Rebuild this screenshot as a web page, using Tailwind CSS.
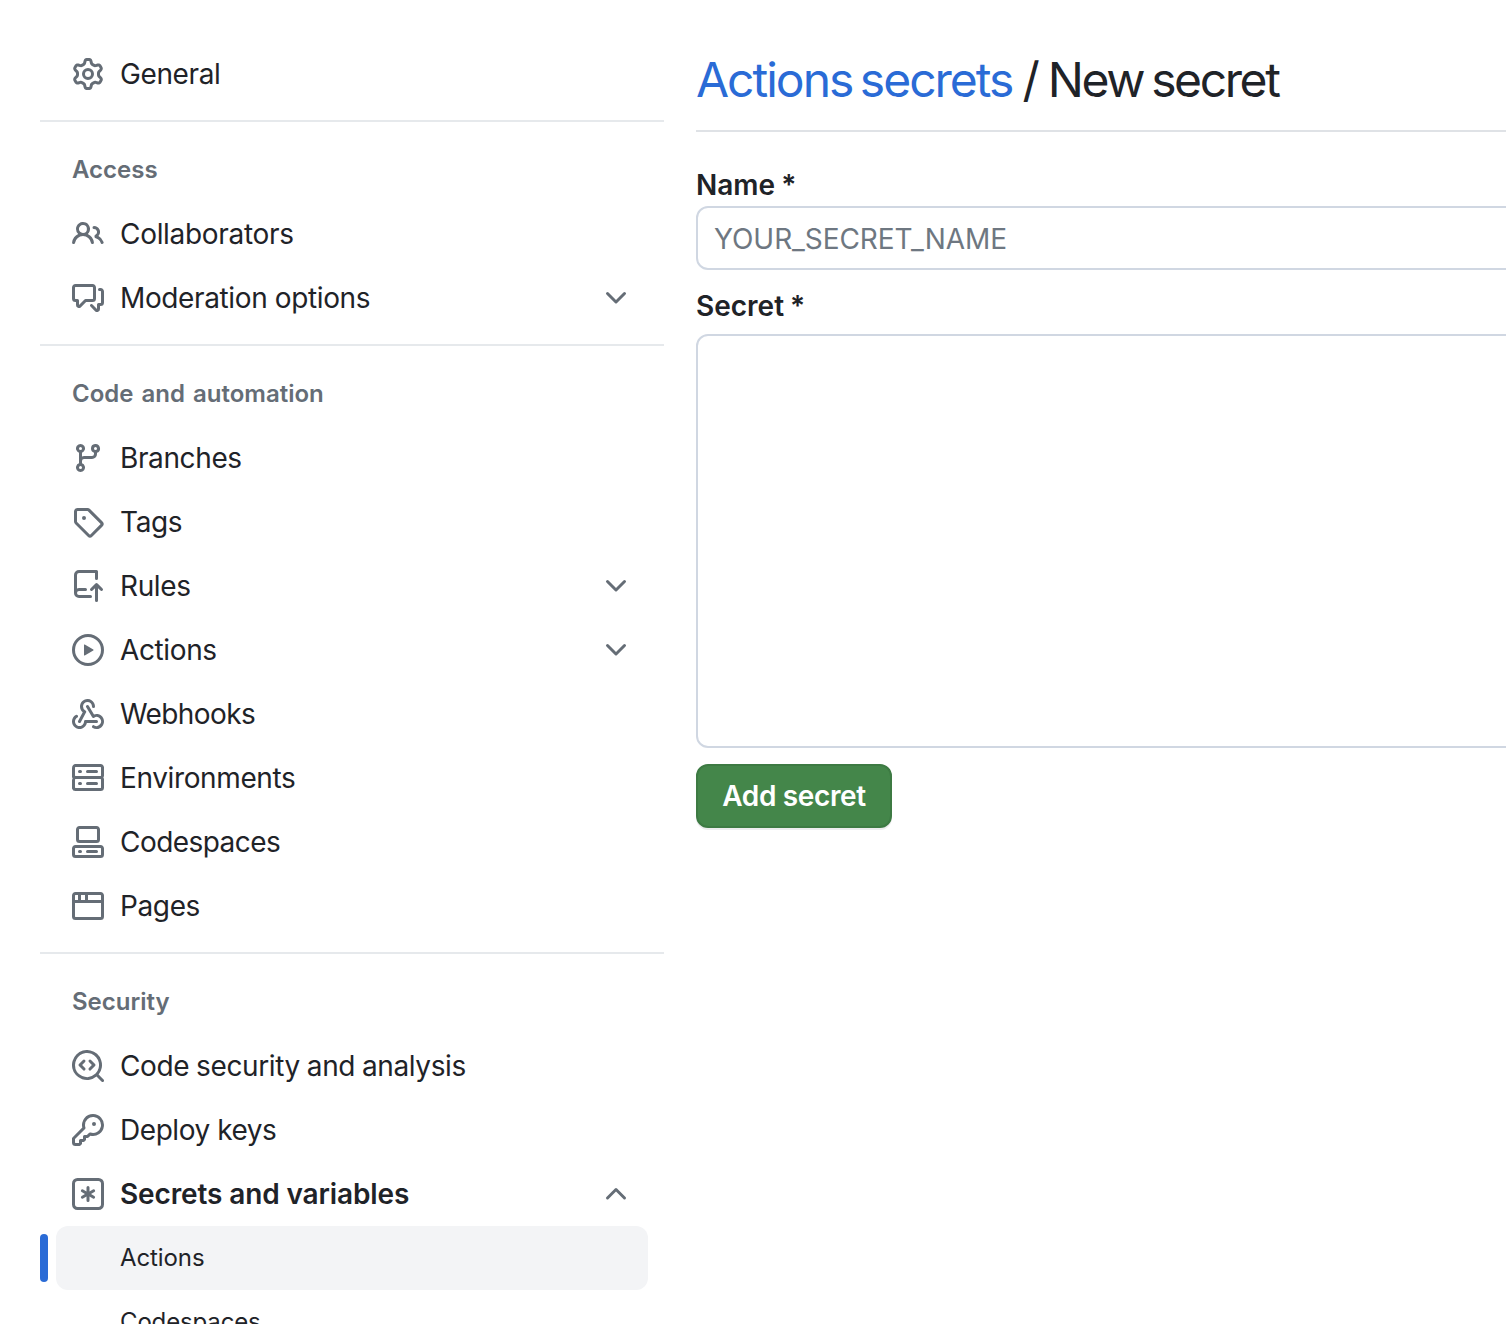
<!DOCTYPE html>
<html lang="en">
<head>
  <meta charset="UTF-8">
  <meta name="viewport" content="width=device-width, initial-scale=1.0">
  <title>Actions secrets / New secret</title>
  <script src="https://cdn.jsdelivr.net/npm/@tailwindcss/browser@4"></script>
</head>
<body class="bg-white text-[#1f2328] font-['Inter',sans-serif] h-[1324px] overflow-hidden">
  <div class="flex gap-8 pl-10 h-[1324px] overflow-hidden">

    <!-- Sidebar -->
    <nav class="w-[624px] shrink-0 pt-[42px] text-[28px] tracking-[-0.38px]">
      <a class="mx-4 px-4 h-16 rounded-xl flex items-center gap-4">
        <svg class="w-8 h-8 fill-[#656d76] shrink-0" viewBox="0 0 16 16"><path d="M8 0a8.2 8.2 0 0 1 .701.031C9.444.095 9.99.645 10.16 1.29l.288 1.107c.018.066.079.158.212.224.231.114.454.243.668.386.123.082.233.09.299.071l1.103-.303c.644-.176 1.392.021 1.82.63.27.385.506.792.704 1.218.315.675.111 1.422-.364 1.891l-.814.806c-.049.048-.098.147-.088.294.016.257.016.515 0 .772-.01.147.038.246.088.294l.814.806c.475.469.679 1.216.364 1.891a7.977 7.977 0 0 1-.704 1.217c-.428.61-1.176.807-1.82.63l-1.102-.302c-.067-.019-.177-.011-.3.071a5.909 5.909 0 0 1-.668.386c-.133.066-.194.158-.211.224l-.29 1.106c-.168.646-.715 1.196-1.458 1.26a8.006 8.006 0 0 1-1.402 0c-.743-.064-1.289-.614-1.458-1.26l-.289-1.106c-.018-.066-.079-.158-.212-.224a5.738 5.738 0 0 1-.668-.386c-.123-.082-.233-.09-.299-.071l-1.103.303c-.644.176-1.392-.021-1.82-.63a8.12 8.12 0 0 1-.704-1.218c-.315-.675-.111-1.422.363-1.891l.815-.806c.05-.048.098-.147.088-.294a6.214 6.214 0 0 1 0-.772c.01-.147-.038-.246-.088-.294l-.815-.806C.635 6.045.431 5.298.746 4.623a7.92 7.92 0 0 1 .704-1.217c.428-.61 1.176-.807 1.82-.63l1.102.302c.067.019.177.011.3-.071.214-.143.437-.272.668-.386.133-.066.194-.158.211-.224l.29-1.106C6.009.645 6.556.095 7.299.03 7.53.01 7.764 0 8 0Zm-.571 1.525c-.036.003-.108.036-.137.146l-.289 1.105c-.147.561-.549.967-.998 1.189-.173.086-.34.183-.5.29-.417.278-.97.423-1.529.27l-1.103-.303c-.109-.03-.175.016-.195.045-.22.312-.412.644-.573.99-.014.031-.021.11.059.19l.815.806c.411.406.562.957.53 1.456a4.709 4.709 0 0 0 0 .582c.032.499-.119 1.05-.53 1.456l-.815.806c-.081.08-.073.159-.059.19.162.346.353.677.573.989.02.03.085.076.195.046l1.102-.303c.56-.153 1.113-.008 1.53.27.161.107.328.204.501.29.447.222.85.629.997 1.189l.289 1.105c.029.109.101.143.137.146a6.6 6.6 0 0 0 1.142 0c.036-.003.108-.036.137-.146l.289-1.105c.147-.561.549-.967.998-1.189.173-.086.34-.183.5-.29.417-.278.97-.423 1.529-.27l1.103.303c.109.029.175-.016.195-.045.22-.313.411-.644.573-.99.014-.031.021-.11-.059-.19l-.815-.806c-.411-.406-.562-.957-.53-1.456a4.709 4.709 0 0 0 0-.582c-.032-.499.119-1.05.53-1.456l.815-.806c.081-.08.073-.159.059-.19a6.464 6.464 0 0 0-.573-.989c-.02-.03-.085-.076-.195-.046l-1.102.303c-.56.153-1.113.008-1.53-.27a4.44 4.44 0 0 0-.501-.29c-.447-.222-.85-.629-.997-1.189l-.289-1.105c-.029-.11-.101-.143-.137-.146a6.6 6.6 0 0 0-1.142 0ZM11 8a3 3 0 1 1-6 0 3 3 0 0 1 6 0ZM9.5 8a1.5 1.5 0 1 0-3.001.001A1.5 1.5 0 0 0 9.5 8Z"/></svg>
        <span>General</span>
      </a>

      <!-- Access -->
      <div class="mt-[14px] h-0.5 bg-[#e6e9ec]"></div>
      <h2 class="mt-7 mb-3 px-8 h-10 flex items-center text-[24px] font-semibold text-[#656d76] tracking-normal">Access</h2>
      <a class="mx-4 px-4 h-16 rounded-xl flex items-center gap-4">
        <svg class="w-8 h-8 fill-[#656d76] shrink-0" viewBox="0 0 16 16"><path d="M2 5.5a3.5 3.5 0 1 1 5.898 2.549 5.508 5.508 0 0 1 3.034 4.084.75.75 0 1 1-1.482.235 4 4 0 0 0-7.9 0 .75.75 0 0 1-1.482-.236A5.507 5.507 0 0 1 3.102 8.05 3.493 3.493 0 0 1 2 5.5ZM11 4a3.001 3.001 0 0 1 2.22 5.018 5.01 5.01 0 0 1 2.56 3.012.749.749 0 0 1-.885.954.752.752 0 0 1-.549-.514 3.507 3.507 0 0 0-2.522-2.372.75.75 0 0 1-.574-.73v-.352a.75.75 0 0 1 .416-.672A1.5 1.5 0 0 0 11 5.5.75.75 0 0 1 11 4Zm-5.5-.5a2 2 0 1 0-.001 3.999A2 2 0 0 0 5.5 3.5Z"/></svg>
        <span class="tracking-[-0.3px]">Collaborators</span>
      </a>
      <a class="mx-4 px-4 h-16 rounded-xl flex items-center gap-4">
        <svg class="w-8 h-8 fill-[#656d76] shrink-0" viewBox="0 0 16 16"><path d="M1.75 1h8.5c.966 0 1.75.784 1.75 1.75v5.5A1.75 1.75 0 0 1 10.25 10H7.061l-2.574 2.573A1.458 1.458 0 0 1 2 11.543V10h-.25A1.75 1.75 0 0 1 0 8.25v-5.5C0 1.784.784 1 1.75 1ZM1.5 2.75v5.5c0 .138.112.25.25.25h1a.75.75 0 0 1 .75.75v2.19l2.72-2.72a.749.749 0 0 1 .53-.22h3.5a.25.25 0 0 0 .25-.25v-5.5a.25.25 0 0 0-.25-.25h-8.5a.25.25 0 0 0-.25.25Zm13 2a.25.25 0 0 0-.25-.25h-.5a.75.75 0 0 1 0-1.5h.5c.966 0 1.75.784 1.75 1.75v5.5A1.75 1.75 0 0 1 14.25 12H14v1.543a1.458 1.458 0 0 1-2.487 1.03L9.22 12.28a.749.749 0 0 1 .326-1.275.749.749 0 0 1 .734.215l2.22 2.22v-2.19a.75.75 0 0 1 .75-.75h1a.25.25 0 0 0 .25-.25Z"/></svg>
        <span>Moderation options</span>
        <svg class="w-8 h-8 fill-[#656d76] shrink-0 ml-auto" viewBox="0 0 16 16"><path d="M12.78 5.22a.749.749 0 0 1 0 1.06l-4.25 4.25a.749.749 0 0 1-1.06 0L3.22 6.28a.749.749 0 1 1 1.06-1.06L8 8.939l3.72-3.719a.749.749 0 0 1 1.06 0Z"/></svg>
      </a>

      <!-- Code and automation -->
      <div class="mt-[14px] h-0.5 bg-[#e6e9ec]"></div>
      <h2 class="mt-7 mb-3 px-8 h-10 flex items-center text-[24px] font-semibold text-[#656d76] tracking-normal [word-spacing:2px]">Code and automation</h2>
      <a class="mx-4 px-4 h-16 rounded-xl flex items-center gap-4">
        <svg class="w-8 h-8 fill-[#656d76] shrink-0" viewBox="0 0 16 16"><path d="M9.5 3.25a2.25 2.25 0 1 1 3 2.122V6A2.5 2.5 0 0 1 10 8.5H6a1 1 0 0 0-1 1v1.128a2.251 2.251 0 1 1-1.5 0V5.372a2.25 2.25 0 1 1 1.5 0v1.836A2.493 2.493 0 0 1 6 7h4a1 1 0 0 0 1-1v-.628A2.25 2.25 0 0 1 9.5 3.25Zm-6 0a.75.75 0 1 0 1.5 0 .75.75 0 0 0-1.5 0Zm8.25-.75a.75.75 0 1 0 0 1.5.75.75 0 0 0 0-1.5ZM4.25 12a.75.75 0 1 0 0 1.5.75.75 0 0 0 0-1.5Z"/></svg>
        <span>Branches</span>
      </a>
      <a class="mx-4 px-4 h-16 rounded-xl flex items-center gap-4">
        <svg class="w-8 h-8 fill-[#656d76] shrink-0" viewBox="0 0 16 16"><path d="M1 7.775V2.75C1 1.784 1.784 1 2.75 1h5.025c.464 0 .91.184 1.238.513l6.25 6.25a1.75 1.75 0 0 1 0 2.474l-5.026 5.026a1.75 1.75 0 0 1-2.474 0l-6.25-6.25A1.752 1.752 0 0 1 1 7.775Zm1.5 0c0 .066.026.13.073.177l6.25 6.25a.25.25 0 0 0 .354 0l5.025-5.025a.25.25 0 0 0 0-.354l-6.25-6.25a.25.25 0 0 0-.177-.073H2.75a.25.25 0 0 0-.25.25ZM6 5a1 1 0 1 1 0 2 1 1 0 0 1 0-2Z"/></svg>
        <span>Tags</span>
      </a>
      <a class="mx-4 px-4 h-16 rounded-xl flex items-center gap-4">
        <svg class="w-8 h-8 fill-[#656d76] shrink-0" viewBox="0 0 16 16"><path d="M1 2.5A2.5 2.5 0 0 1 3.5 0h8.75a.75.75 0 0 1 .75.75v3.5a.75.75 0 0 1-1.5 0V1.5h-8a1 1 0 0 0-1 1v6.708A2.493 2.493 0 0 1 3.5 9h3.25a.75.75 0 0 1 0 1.5H3.5a1 1 0 0 0 0 2h5.75a.75.75 0 0 1 0 1.5H3.5A2.5 2.5 0 0 1 1 11.5Zm13.23 7.79h-.001l-1.224-1.224v6.184a.75.75 0 0 1-1.5 0V9.066L10.28 10.29a.75.75 0 0 1-1.06-1.061l2.505-2.504a.75.75 0 0 1 1.06 0L15.29 9.23a.751.751 0 0 1-.018 1.042.751.751 0 0 1-1.042.018Z"/></svg>
        <span>Rules</span>
        <svg class="w-8 h-8 fill-[#656d76] shrink-0 ml-auto" viewBox="0 0 16 16"><path d="M12.78 5.22a.749.749 0 0 1 0 1.06l-4.25 4.25a.749.749 0 0 1-1.06 0L3.22 6.28a.749.749 0 1 1 1.06-1.06L8 8.939l3.72-3.719a.749.749 0 0 1 1.06 0Z"/></svg>
      </a>
      <a class="mx-4 px-4 h-16 rounded-xl flex items-center gap-4">
        <svg class="w-8 h-8 fill-[#656d76] shrink-0" viewBox="0 0 16 16"><path d="M8 0a8 8 0 1 1 0 16A8 8 0 0 1 8 0ZM1.5 8a6.5 6.5 0 1 0 13 0 6.5 6.5 0 0 0-13 0Zm4.879-2.773 4.264 2.559a.25.25 0 0 1 0 .428l-4.264 2.559A.25.25 0 0 1 6 10.559V5.442a.25.25 0 0 1 .379-.215Z"/></svg>
        <span>Actions</span>
        <svg class="w-8 h-8 fill-[#656d76] shrink-0 ml-auto" viewBox="0 0 16 16"><path d="M12.78 5.22a.749.749 0 0 1 0 1.06l-4.25 4.25a.749.749 0 0 1-1.06 0L3.22 6.28a.749.749 0 1 1 1.06-1.06L8 8.939l3.72-3.719a.749.749 0 0 1 1.06 0Z"/></svg>
      </a>
      <a class="mx-4 px-4 h-16 rounded-xl flex items-center gap-4">
        <svg class="w-8 h-8 fill-[#656d76] shrink-0" viewBox="0 0 16 16"><path d="M5.5 4.25a2.25 2.25 0 0 1 4.5 0 .75.75 0 0 0 1.5 0 3.75 3.75 0 1 0-6.14 2.889l-2.272 4.258a.75.75 0 0 0 1.324.706L7 7.25a.75.75 0 0 0-.309-1.015A2.25 2.25 0 0 1 5.5 4.25Z"/><path d="M7.364 3.607a.75.75 0 0 1 1.03.257l2.608 4.349a3.75 3.75 0 1 1-.628 6.785.75.75 0 0 1 .752-1.299 2.25 2.25 0 1 0-.033-3.88.75.75 0 0 1-1.03-.256L7.107 4.636a.75.75 0 0 1 .257-1.03Z"/><path d="M2.9 8.776A.75.75 0 0 1 2.625 9.8 2.25 2.25 0 1 0 6 11.75a.75.75 0 0 1 .75-.751h5.5a.75.75 0 0 1 0 1.5H7.425a3.751 3.751 0 1 1-5.55-3.998.75.75 0 0 1 1.024.274Z"/></svg>
        <span class="tracking-[-0.6px]">Webhooks</span>
      </a>
      <a class="mx-4 px-4 h-16 rounded-xl flex items-center gap-4">
        <svg class="w-8 h-8 fill-[#656d76] shrink-0" viewBox="0 0 16 16"><path d="M1.75 1h12.5c.966 0 1.75.784 1.75 1.75v4c0 .372-.116.717-.314 1 .198.283.314.628.314 1v4a1.75 1.75 0 0 1-1.75 1.75H1.75A1.75 1.75 0 0 1 0 13.25v-4c0-.372.116-.717.314-1a1.739 1.739 0 0 1-.314-1v-4C0 1.784.784 1 1.75 1ZM1.5 2.75v4c0 .138.112.25.25.25h12.5a.25.25 0 0 0 .25-.25v-4a.25.25 0 0 0-.25-.25H1.75a.25.25 0 0 0-.25.25Zm.25 5.75a.25.25 0 0 0-.25.25v4c0 .138.112.25.25.25h12.5a.25.25 0 0 0 .25-.25v-4a.25.25 0 0 0-.25-.25ZM7 4.75A.75.75 0 0 1 7.75 4h4.5a.75.75 0 0 1 0 1.5h-4.5A.75.75 0 0 1 7 4.75ZM7.75 10h4.5a.75.75 0 0 1 0 1.5h-4.5a.75.75 0 0 1 0-1.5ZM3 4.75A.75.75 0 0 1 3.75 4h.5a.75.75 0 0 1 0 1.5h-.5A.75.75 0 0 1 3 4.75ZM3.75 10h.5a.75.75 0 0 1 0 1.5h-.5a.75.75 0 0 1 0-1.5Z"/></svg>
        <span>Environments</span>
      </a>
      <a class="mx-4 px-4 h-16 rounded-xl flex items-center gap-4">
        <svg class="w-8 h-8 fill-[#656d76] shrink-0" viewBox="0 0 16 16"><path d="M0 11.25c0-.966.784-1.75 1.75-1.75h12.5c.966 0 1.75.784 1.75 1.75v3A1.75 1.75 0 0 1 14.25 16H1.75A1.75 1.75 0 0 1 0 14.25Zm2-9.5C2 .784 2.784 0 3.75 0h8.5C13.216 0 14 .784 14 1.75v5a1.75 1.75 0 0 1-1.75 1.75h-8.5A1.75 1.75 0 0 1 2 6.75Zm1.75-.25a.25.25 0 0 0-.25.25v5c0 .138.112.25.25.25h8.5a.25.25 0 0 0 .25-.25v-5a.25.25 0 0 0-.25-.25Zm-2 9.5a.25.25 0 0 0-.25.25v3c0 .138.112.25.25.25h12.5a.25.25 0 0 0 .25-.25v-3a.25.25 0 0 0-.25-.25Z"/><path d="M7 12.75a.75.75 0 0 1 .75-.75h4.5a.75.75 0 0 1 0 1.5h-4.5a.75.75 0 0 1-.75-.75Zm-4 0a.75.75 0 0 1 .75-.75h.5a.75.75 0 0 1 0 1.5h-.5a.75.75 0 0 1-.75-.75Z"/></svg>
        <span class="tracking-[-0.55px]">Codespaces</span>
      </a>
      <a class="mx-4 px-4 h-16 rounded-xl flex items-center gap-4">
        <svg class="w-8 h-8 fill-[#656d76] shrink-0" viewBox="0 0 16 16"><path d="M0 2.75C0 1.784.784 1 1.75 1h12.5c.966 0 1.75.784 1.75 1.75v10.5A1.75 1.75 0 0 1 14.25 15H1.75A1.75 1.75 0 0 1 0 13.25ZM14.5 6.5h-13v6.75c0 .138.112.25.25.25h12.5a.25.25 0 0 0 .25-.25Zm-13-1.5h1.5V2.5H1.75a.25.25 0 0 0-.25.25Zm3 0h2V2.5h-2Zm3.5 0h6.5V2.75a.25.25 0 0 0-.25-.25H8Z"/></svg>
        <span>Pages</span>
      </a>

      <!-- Security -->
      <div class="mt-[14px] h-0.5 bg-[#e6e9ec]"></div>
      <h2 class="mt-7 mb-3 px-8 h-10 flex items-center text-[24px] font-semibold text-[#656d76] tracking-normal">Security</h2>
      <a class="mx-4 px-4 h-16 rounded-xl flex items-center gap-4">
        <svg class="w-8 h-8 fill-[#656d76] shrink-0" viewBox="0 0 16 16"><path d="M8.47 4.97a.75.75 0 0 0 0 1.06L9.94 7.5 8.47 8.97a.75.75 0 1 0 1.06 1.06l2-2a.75.75 0 0 0 0-1.06l-2-2a.75.75 0 0 0-1.06 0ZM6.53 6.03a.75.75 0 0 0-1.06-1.06l-2 2a.75.75 0 0 0 0 1.06l2 2a.75.75 0 1 0 1.06-1.06L5.06 7.5l1.47-1.47Z"/><path d="M12.246 13.307a7.501 7.501 0 1 1 1.06-1.06l2.474 2.473a.749.749 0 0 1-.326 1.275.749.749 0 0 1-.734-.215ZM1.5 7.5a6.002 6.002 0 0 0 3.608 5.504 6.002 6.002 0 0 0 6.486-1.117.748.748 0 0 1 .292-.293A6 6 0 1 0 1.5 7.5Z"/></svg>
        <span class="[word-spacing:-0.6px]">Code security and analysis</span>
      </a>
      <a class="mx-4 px-4 h-16 rounded-xl flex items-center gap-4">
        <svg class="w-8 h-8 fill-[#656d76] shrink-0" viewBox="0 0 16 16"><path d="M10.5 0a5.499 5.499 0 1 1-1.288 10.848l-.932.932a.749.749 0 0 1-.53.22H7v.75a.749.749 0 0 1-.22.53l-.5.5a.749.749 0 0 1-.53.22H5v.75a.749.749 0 0 1-.22.53l-.5.5a.749.749 0 0 1-.53.22h-2A1.75 1.75 0 0 1 0 14.25v-2c0-.199.079-.389.22-.53l4.932-4.932A5.5 5.5 0 0 1 10.5 0Zm-4 5.5c-.001.431.069.86.205 1.269a.75.75 0 0 1-.181.768L1.5 12.56v1.69c0 .138.112.25.25.25h1.69l.06-.06v-1.19a.75.75 0 0 1 .75-.75h1.19l.06-.06v-1.19a.75.75 0 0 1 .75-.75h1.19l1.023-1.025a.75.75 0 0 1 .768-.18A4 4 0 1 0 6.5 5.5ZM11 6a1 1 0 1 1 0-2 1 1 0 0 1 0 2Z"/></svg>
        <span class="tracking-[-0.45px]">Deploy keys</span>
      </a>
      <a class="mx-4 px-4 h-16 rounded-xl flex items-center gap-4 font-semibold tracking-[-0.12px]">
        <svg class="w-8 h-8 fill-[#656d76] shrink-0" viewBox="0 0 16 16"><path d="M0 2.75A2.75 2.75 0 0 1 2.75 0h10.5A2.75 2.75 0 0 1 16 2.75v10.5A2.75 2.75 0 0 1 13.25 16H2.75A2.75 2.75 0 0 1 0 13.25Zm2.75-1.25c-.69 0-1.25.56-1.25 1.25v10.5c0 .69.56 1.25 1.25 1.25h10.5c.69 0 1.25-.56 1.25-1.25V2.75c0-.69-.56-1.25-1.25-1.25Z"/><path d="M8 4a.75.75 0 0 1 .75.75V6.7l1.69-.975a.75.75 0 0 1 .75 1.3L9.5 8l1.69.976a.75.75 0 0 1-.75 1.298L8.75 9.3v1.951a.75.75 0 0 1-1.5 0V9.299l-1.69.976a.75.75 0 0 1-.75-1.3L6.5 8l-1.69-.975a.75.75 0 0 1 .75-1.3l1.69.976V4.75A.75.75 0 0 1 8 4Z"/></svg>
        <span>Secrets and variables</span>
        <svg class="w-8 h-8 fill-[#656d76] shrink-0 ml-auto" viewBox="0 0 16 16"><path d="M3.22 10.53a.749.749 0 0 1 0-1.06l4.25-4.25a.749.749 0 0 1 1.06 0l4.25 4.25a.749.749 0 0 1-1.06 1.06L8 6.811 4.28 10.53a.749.749 0 0 1-1.06 0Z"/></svg>
      </a>
      <a class="relative mx-4 pl-16 h-16 rounded-xl flex items-center bg-[#f3f4f6] text-[24px] tracking-[-0.1px]">
        <span class="absolute -left-4 top-2 w-2 h-12 rounded-md bg-[#2a6bd6]"></span>
        <span>Actions</span>
      </a>
      <a class="mx-4 pl-16 h-16 rounded-xl flex items-center text-[24px] tracking-[-0.15px]">
        <span>Codespaces</span>
      </a>
    </nav>

    <!-- Main -->
    <main class="w-[900px] shrink-0">
      <div class="h-[132px] pt-[50px] border-b-2 border-[#dfe2e6]">
        <h1 class="text-[48px] leading-[60px] font-normal whitespace-nowrap tracking-[-2px] [word-spacing:-1.5px]">
          <a class="text-[#2a6bd6] [word-spacing:-4px]">Actions secrets</a> / <span class="tracking-[-2.4px] [word-spacing:-3px]">New secret</span>
        </h1>
      </div>
      <form class="pt-[33px]">
        <label class="block h-[41px] leading-10 text-[28px] font-semibold [word-spacing:-1px]">Name *</label>
        <input type="text" placeholder="YOUR_SECRET_NAME" class="block w-full h-16 px-4 pt-0.5 text-[28px] tracking-[-0.06px] border-2 border-[#d0d7e2] rounded-xl placeholder:text-[#6e7781]">
        <label class="block mt-4 h-10 leading-10 text-[28px] font-semibold [word-spacing:-1px]">Secret *</label>
        <textarea class="block mt-2 w-full h-[414px] border-2 border-[#d0d7e2] rounded-xl resize-none"></textarea>
        <button type="button" class="mt-4 block w-[196px] h-16 rounded-xl bg-[#44864a] border-2 border-[#3d7a43] shadow-[0_2px_0_rgba(27,31,36,0.08)] text-white text-[28px] font-semibold tracking-[-0.35px]">Add secret</button>
      </form>
    </main>
  </div>
</body>
</html>
